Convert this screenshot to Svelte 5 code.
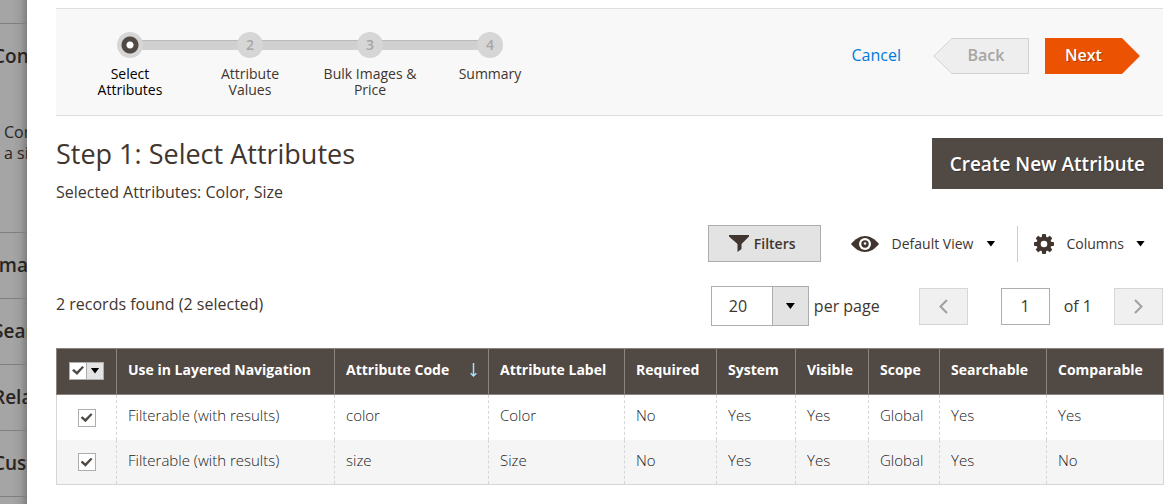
<script lang="ts">
  type Attribute = {
    filterable: string;
    code: string;
    label: string;
    required: string;
    system: string;
    visible: string;
    scope: string;
    searchable: string;
    comparable: string;
    checked: boolean;
  };

  const steps = ['Select Attributes', 'Attribute Values', 'Bulk Images & Price', 'Summary'];

  const sections = ['Images And Videos', 'Search Engine Optimization', 'Related Products', 'Customizable Options'];

  const columns = [
    { key: 'filterable', title: 'Use in Layered Navigation', width: 218 },
    { key: 'code', title: 'Attribute Code', width: 154, sorted: true },
    { key: 'label', title: 'Attribute Label', width: 136 },
    { key: 'required', title: 'Required', width: 92 },
    { key: 'system', title: 'System', width: 79 },
    { key: 'visible', title: 'Visible', width: 73 },
    { key: 'scope', title: 'Scope', width: 71 },
    { key: 'searchable', title: 'Searchable', width: 107 },
    { key: 'comparable', title: 'Comparable', width: 117 }
  ];

  let rows: Attribute[] = $state([
    { filterable: 'Filterable (with results)', code: 'color', label: 'Color', required: 'No', system: 'Yes', visible: 'Yes', scope: 'Global', searchable: 'Yes', comparable: 'Yes', checked: true },
    { filterable: 'Filterable (with results)', code: 'size', label: 'Size', required: 'No', system: 'Yes', visible: 'Yes', scope: 'Global', searchable: 'Yes', comparable: 'No', checked: true }
  ]);

  let currentStep = $state(0);
  let pageSize = $state('20');
  let page = $state('1');

  const selected = $derived(rows.filter((r) => r.checked));
  const allChecked = $derived(selected.length === rows.length);

  function toggleAll() {
    const next = !allChecked;
    rows.forEach((r) => (r.checked = next));
  }
</script>

<div class="page">
  <aside class="backdrop">
    <section class="backdrop-top"></section>
    <section class="backdrop-config">
      <h3>Configurations</h3>
      <p>Configurable products<br />a simple product</p>
    </section>
    {#each sections as title}
      <section class="backdrop-item"><h3>{title}</h3></section>
    {/each}
  </aside>

  <main class="modal">
    <header class="wizard">
      <ol class="steps">
        {#each steps as step, i}
          <li class:active={i === currentStep}>
            <span class="dot">{i === currentStep ? '' : i + 1}</span>
            <span class="step-label">{step}</span>
          </li>
        {/each}
      </ol>
      <div class="wizard-actions">
        <button class="cancel">Cancel</button>
        <button class="back" disabled={currentStep === 0} onclick={() => currentStep--}>
          <svg class="tip" viewBox="0 0 19 36" width="19" height="36" aria-hidden="true">
            <path d="M19 .5 .7 18 19 35.5" fill="#eee" stroke="#d2d2d2" />
          </svg>
          <span>Back</span>
        </button>
        <button class="next" onclick={() => (currentStep = Math.min(currentStep + 1, 3))}>Next</button>
      </div>
    </header>

    <div class="title-row">
      <div>
        <h1>Step 1: Select Attributes</h1>
        <p>Selected Attributes: {selected.map((r) => r.label).join(', ')}</p>
      </div>
      <button class="create">Create New Attribute</button>
    </div>

    <div class="toolbar">
      <button class="filters">
        <svg viewBox="0 0 20 17" width="20" height="17" aria-hidden="true">
          <path d="M0 0h20v1.5L12.5 9v5L8.500 17V9L0 1.500z" fill="#41362f" />
        </svg>
        Filters
      </button>
      <button class="view">
        <svg viewBox="0 0 28 16" width="28" height="16" aria-hidden="true">
          <path d="M0 8C4 3 9 0 14 0s10 3 14 8c-4 5-9 8-14 8S4 13 0 8z" fill="#41362f" />
          <circle cx="14" cy="8" r="6" fill="#fff" />
          <circle cx="14" cy="8" r="3.700" fill="#41362f" />
          <circle cx="14" cy="7.500" r="1.300" fill="#fff" />
        </svg>
        <span>Default View</span>
        <i class="caret"></i>
      </button>
      <button class="columns">
        <svg viewBox="-10 -10 20 20" width="20" height="20" aria-hidden="true">
          {#each [0, 45, 90, 135, 180, 225, 270, 315] as angle}
            <path d="M-2.600-6-1.700-10H1.700L2.600-6z" fill="#41362f" transform="rotate({angle})" />
          {/each}
          <circle r="5.300" fill="none" stroke="#41362f" stroke-width="4" />
        </svg>
        <span>Columns</span>
        <i class="caret"></i>
      </button>
    </div>

    <div class="pager-row">
      <p class="records">{rows.length} records found ({selected.length} selected)</p>
      <div class="select-box">
        <select id="page-size" bind:value={pageSize}>
          <option>20</option>
          <option>30</option>
          <option>50</option>
          <option>100</option>
        </select>
        <i class="caret"></i>
      </div>
      <label class="per-page" for="page-size">per page</label>
      <div class="pager">
        <button class="page-btn" aria-label="Previous page" disabled>
          <svg viewBox="0 0 9 15" width="9" height="15"><path d="M8 1 1.500 7.500 8 14" /></svg>
        </button>
        <input id="page-number" type="text" bind:value={page} />
        <label for="page-number">of 1</label>
        <button class="page-btn" aria-label="Next page" disabled>
          <svg viewBox="0 0 9 15" width="9" height="15"><path d="M1 1 7.500 7.500 1 14" /></svg>
        </button>
      </div>
    </div>

    <table>
      <colgroup>
        <col style="width: 60px" />
        {#each columns as col}
          <col style="width: {col.width}px" />
        {/each}
      </colgroup>
      <thead>
        <tr>
          <th class="check-cell">
            <div class="multicheck">
              <input type="checkbox" aria-label="Select all" checked={allChecked} onchange={toggleAll} />
              <button aria-label="Selection options"><i class="caret"></i></button>
            </div>
          </th>
          {#each columns as col}
            <th>
              <div class="head">
                {col.title}
                {#if col.sorted}
                  <svg viewBox="0 0 7 14" width="7" height="14" aria-hidden="true">
                    <path d="M3.500 0v12.500M.700 10.300l2.800 2.700 2.800-2.700" fill="none" stroke="#a6e0ff" stroke-width="1.500" />
                  </svg>
                {/if}
              </div>
            </th>
          {/each}
        </tr>
      </thead>
      <tbody>
        {#each rows as row}
          <tr>
            <td class="check-cell">
              <input type="checkbox" aria-label="Select {row.code}" bind:checked={row.checked} />
            </td>
            {#each columns as col}
              <td>{row[col.key as keyof Attribute]}</td>
            {/each}
          </tr>
        {/each}
      </tbody>
    </table>
  </main>
</div>

<style>
  :global(body) {
    margin: 0;
    background: #fff;
  }

  .page {
    display: flex;
    min-height: 100vh;
    font-family: 'Open Sans', 'Noto Sans', sans-serif;
    font-size: 14px;
    color: #41362f;
  }

  .page * {
    box-sizing: border-box;
  }

  h1, h3, p, ol {
    margin: 0;
    padding: 0;
    font-weight: 400;
  }

  button, input, select {
    font: inherit;
    color: inherit;
    margin: 0;
    border-radius: 0;
  }

  button {
    padding: 0;
    border: 0;
    background: none;
    cursor: pointer;
  }

  /* Dimmed product form behind the panel */
  .backdrop {
    flex: none;
    width: 27px;
    overflow: hidden;
    white-space: nowrap;
    color: #292421;
    background: linear-gradient(to right, #a5a5a5 12px, #9d9d9d 20px, #808080);
  }

  .backdrop section {
    border-bottom: 1px solid #7f7f7f;
  }

  .backdrop h3 {
    margin-left: -7px;
    font-size: 19px;
    font-weight: 600;
    line-height: 24px;
  }

  .backdrop-top {
    height: 24px;
  }

  .backdrop-config {
    height: 209px;
    padding-top: 20px;
  }

  .backdrop-config p {
    margin: 54px 0 0 4px;
    font-size: 16px;
    line-height: 21px;
  }

  .backdrop-item {
    height: 66px;
    padding-top: 20px;
  }

  .modal {
    flex: 1;
    min-width: 0;
    padding: 8px 7px 18px 29px;
    background: #fff;
  }

  .wizard {
    display: flex;
    justify-content: space-between;
    align-items: flex-start;
    height: 108px;
    padding: 23px 23px 0 14px;
    border-top: 1px solid #dfdfdf;
    border-bottom: 1px solid #dfdfdf;
    background: #f8f8f8;
  }

  .steps {
    display: flex;
    list-style: none;
  }

  .steps li {
    position: relative;
    display: flex;
    flex-direction: column;
    align-items: center;
    gap: 8px;
    width: 120px;
    padding: 0 10px;
    font-weight: 500;
    line-height: 16px;
    text-align: center;
  }

  .steps li + li::before {
    content: '';
    position: absolute;
    top: 8px;
    right: 50%;
    width: 100%;
    height: 9px;
    border-top: 1px solid #bbb;
    background: #d0d0d0;
  }

  .steps li.active {
    color: #000;
  }

  .dot {
    position: relative;
    z-index: 1;
    width: 26px;
    height: 26px;
    border-radius: 50%;
    background: #d6d6d6;
    color: #a6a6a6;
    font-weight: 600;
    line-height: 26px;
  }

  .active .dot {
    background: radial-gradient(circle, #fff 3px, #514943 4px, #514943 8px, #d6d6d6 9px);
  }

  .wizard-actions {
    display: flex;
    padding-top: 6px;
    font-size: 16px;
    font-weight: 600;
  }

  .cancel {
    margin-right: 32px;
    height: 36px;
    padding-bottom: 2px;
    color: #007bdb;
    font-weight: 500;
  }

  .back {
    display: flex;
    align-items: center;
    width: 96px;
    height: 36px;
    margin-right: 16px;
    color: #a7a5a3;
    font-weight: 600;
  }

  .tip {
    flex: none;
  }

  .back span {
    flex: 1;
    height: 36px;
    padding-right: 8px;
    border: 1px solid #d2d2d2;
    border-left: 0;
    background: #eee;
    line-height: 32px;
  }

  .next {
    width: 95px;
    height: 36px;
    padding: 0 18px 2px 0;
    background: #eb5202;
    clip-path: polygon(0 0, 77px 0, 100% 50%, 77px 100%, 0 100%);
    color: #fff;
    font-weight: 600;
    text-shadow: 1px 1px 0 rgba(0, 0, 0, 0.3);
  }

  .title-row {
    display: flex;
    justify-content: space-between;
    align-items: flex-start;
    padding-top: 22px;
  }

  h1 {
    font-size: 27px;
    line-height: 32px;
  }

  .title-row p {
    margin-top: 12px;
    font-size: 16px;
    line-height: 20px;
  }

  .create {
    height: 51px;
    padding: 0 18px;
    background: #514943;
    color: #fff;
    font-size: 19px;
    font-weight: 600;
    text-shadow: 1px 1px 0 rgba(0, 0, 0, 0.3);
  }

  .caret {
    display: block;
    width: 9px;
    height: 6px;
    background: #000;
    clip-path: polygon(0 0, 100% 0, 50% 100%);
  }

  .toolbar {
    display: flex;
    justify-content: flex-end;
    align-items: center;
    margin-top: 23px;
    padding-right: 18px;
  }

  .toolbar button {
    display: flex;
    align-items: center;
  }

  .filters {
    gap: 5px;
    height: 37px;
    padding: 0 24px 0 20px;
    border: 1px solid #adadad;
    background: #e3e3e3;
    font-weight: 600;
  }

  .view {
    gap: 13px;
    height: 36px;
    padding: 0 22px 0 30px;
    border-right: 1px solid #ccc;
  }

  .columns {
    gap: 12px;
    padding-left: 16px;
  }

  .pager-row {
    display: flex;
    align-items: center;
    margin: 24px 0 22px;
    font-size: 16px;
  }

  .records {
    flex: 1;
    padding-bottom: 4px;
  }

  .select-box {
    position: relative;
    width: 98px;
    height: 40px;
  }

  .select-box select {
    appearance: none;
    width: 100%;
    height: 100%;
    padding: 0 0 0 17px;
    border: 1px solid #adadad;
    background: linear-gradient(to right, #fff 60px, #adadad 60px, #adadad 61px, #e3e3e3 61px);
  }

  .select-box .caret {
    position: absolute;
    top: 17px;
    right: 14px;
    pointer-events: none;
  }

  .per-page {
    padding-left: 5px;
  }

  .pager {
    display: flex;
    align-items: center;
    margin-left: 39px;
  }

  .page-btn {
    display: grid;
    place-items: center;
    width: 49px;
    height: 37px;
    border: 1px solid #d6d6d6;
    background: #f0f0f0;
  }

  .page-btn path {
    fill: none;
    stroke: #a0a0a0;
    stroke-width: 2;
  }

  .pager input {
    width: 49px;
    height: 37px;
    margin: 0 14px 0 33px;
    padding: 0;
    border: 1px solid #adadad;
    text-align: center;
  }

  .pager label {
    margin-right: 22px;
  }

  table {
    width: 100%;
    table-layout: fixed;
    border-collapse: collapse;
  }

  th, td {
    padding: 0 0 4px 11px;
    text-align: left;
    white-space: nowrap;
  }

  th {
    height: 46px;
    border: 1px solid #8a837f;
    background: #514943;
    color: #fff;
    font-weight: 700;
  }

  td {
    height: 45px;
    border-left: 1px dashed #d6d6d6;
    color: #222;
    font-size: 15px;
    font-weight: 300;
  }

  td:first-child {
    border-left: 1px solid #d6d6d6;
  }

  td:last-child {
    border-right: 1px solid #d6d6d6;
  }

  tbody tr:last-child td {
    border-bottom: 1px solid #d6d6d6;
  }

  tbody tr:nth-child(even) {
    background: #f5f5f5;
  }

  .head {
    display: flex;
    justify-content: space-between;
    align-items: center;
    padding-right: 11px;
  }

  .check-cell {
    padding: 0 0 2px;
    text-align: center;
  }

  input[type='checkbox'] {
    appearance: none;
    display: inline-grid;
    place-items: center;
    width: 18px;
    height: 18px;
    border: 1px solid #adadad;
    background: #fff;
    vertical-align: middle;
  }

  input[type='checkbox']:checked::before {
    content: '';
    width: 12px;
    height: 9px;
    background: #514943;
    clip-path: polygon(0 50%, 16% 34%, 40% 62%, 86% 0, 100% 14%, 42% 100%);
  }

  .multicheck {
    display: flex;
    justify-content: center;
  }

  .multicheck button {
    display: grid;
    place-items: center;
    width: 17px;
    height: 18px;
    border: 1px solid #adadad;
    border-left: 0;
    background: #e3e3e3;
  }
</style>
